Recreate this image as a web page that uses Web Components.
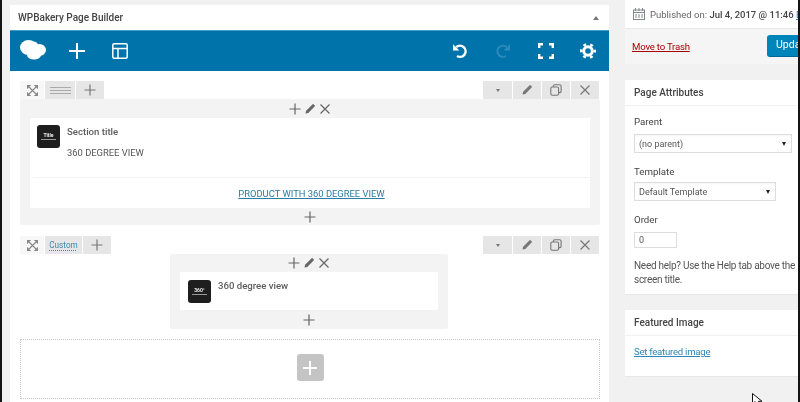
<!DOCTYPE html>
<html>
<head>
<meta charset="utf-8">
<title>WPBakery Page Builder</title>
<style>
html, body { margin: 0; padding: 0; background: #f1f1f1; }
body { font-family: Roboto, "Open Sans", "Liberation Sans", sans-serif; font-size: 10px; color: #555; }
</style>
</head>
<body>
<wp-screen>
    <wp-panel heading="WPBakery Page Builder">
        <vc-navbar></vc-navbar>
        <vc-builder>
            <vc-row>
                <vc-column wide>
                    <vc-element icon="Title" name="Section title">
                        <span slot="param">360 DEGREE VIEW</span>
                        <a slot="footer">PRODUCT WITH 360 DEGREE VIEW</a>
                    </vc-element>
                </vc-column>
            </vc-row>
            <vc-row label="Custom">
                <vc-column>
                    <vc-element icon="360°" name="360 degree view"></vc-element>
                </vc-column>
            </vc-row>
            <vc-dropzone></vc-dropzone>
        </vc-builder>
    </wp-panel>
    <wp-sidebar>
        <wp-publish></wp-publish>
        <wp-box heading="Page Attributes"><wp-attributes></wp-attributes></wp-box>
        <wp-box heading="Featured Image"><wp-featured></wp-featured></wp-box>
    </wp-sidebar>
</wp-screen>

<script>
const ICONS = {
    plus: `<svg viewBox="0 0 12 12" width="12" height="12"><path d="M6 .5v11M.5 6h11" stroke="currentColor" stroke-width="1.2" fill="none"/></svg>`,
    pencil: `<svg viewBox="0 0 12 12" width="12" height="12"><path d="M1.500 10.500l.6-2.800L8.400 1.400a1 1 0 0 1 1.400 0l.8.800a1 1 0 0 1 0 1.400L4.300 9.900z" fill="currentColor"/></svg>`,
    close: `<svg viewBox="0 0 12 12" width="12" height="12"><path d="M1.500 1.500l9 9M10.500 1.500l-9 9" stroke="currentColor" stroke-width="1.200" fill="none"/></svg>`,
    copy: `<svg viewBox="0 0 12 12" width="12" height="12"><g fill="none" stroke="currentColor" stroke-width="1.100"><rect x=".8" y="3" width="7.800" height="8.200" rx="1.500"/><path d="M3.300 3V2.200A1.400 1.400 0 0 1 4.700.8h4.900a1.500 1.500 0 0 1 1.500 1.500v5a1.300 1.300 0 0 1-1.300 1.300h-1.200"/></g></svg>`,
    expand: `<svg viewBox="0 0 11 11" width="11" height="11"><g fill="currentColor"><path d="M0 0h4.200L0 4.200zM11 0v4.200L6.800 0zM0 11V6.800L4.200 11zM11 11H6.800L11 6.800z"/></g><path d="M2 2l7 7M9 2l-7 7" stroke="currentColor" stroke-width="1.100"/></svg>`,
};

class WpScreen extends HTMLElement {
    constructor() {
        super();
        this.attachShadow({mode: "open"}).innerHTML = `
        <style>
        :host {
            display: flex;
            box-sizing: border-box;
            width: 800px;
            height: 402px;
            overflow: hidden;
            position: relative;
            background: #f1f1f1;
            border-left: 2px solid #141414;
            border-right: 2px solid #141414;
            padding-left: 8px;
            gap: 16px;
            filter: blur(.35px);
        }
        .cursor { position: absolute; left: 750px; top: 393px; }
        </style>
        <slot></slot>
        <svg class="cursor" width="12" height="12" viewBox="0 0 12 12"><path d="M.5.5v10.500l2.600-2.400 1.700 3.200h3.500L6.300 8.300h3.700z" fill="#fff" stroke="#111"/></svg>
        `;
    }
}

class WpPanel extends HTMLElement {
    constructor() {
        super();
        this.attachShadow({mode: "open"}).innerHTML = `
        <style>
        :host {
            display: block;
            width: 599px;
            flex: none;
            margin-top: 5px;
            background: #fff;
        }
        header {
            display: flex;
            align-items: center;
            justify-content: space-between;
            height: 25px;
            padding: 0 10px 0 8px;
            font-size: 10px;
            font-weight: 500;
            color: #444;
        }
        i { width: 0; height: 0; border: 3px solid transparent; border-top: 0; border-bottom: 4px solid #72777c; }
        </style>
        <header><span>${this.getAttribute("heading")}</span><i></i></header>
        <slot></slot>
        `;
    }
}

class VcNavbar extends HTMLElement {
    constructor() {
        super();
        this.attachShadow({mode: "open"}).innerHTML = `
        <style>
        :host {
            display: flex;
            align-items: center;
            box-sizing: border-box;
            height: 41px;
            padding: 0 13px 0 10px;
            background: #0073aa;
            border-top: 1px solid #3f9bc6;
            color: #fff;
        }
        svg { flex: none; display: block; }
        .spacer { flex: 1; }
        .logo { margin: -2px 23px 0 0; }
        .add { margin-right: 27px; }
        .undo { margin-right: 27px; }
        .redo { margin-right: 27px; color: #2f8cba; }
        .full { margin-right: 26px; }
        </style>
        <svg class="logo" width="26" height="20" viewBox="0 0 26 20"><g fill="#fff"><ellipse cx="8.500" cy="7.500" rx="8.500" ry="7.500"/><ellipse cx="19.500" cy="10" rx="6.500" ry="6"/><ellipse cx="14" cy="15" rx="7" ry="4.500"/><ellipse cx="13" cy="5" rx="5" ry="3.500"/></g></svg>
        <svg class="add" width="16" height="16" viewBox="0 0 16 16"><path d="M8 0v16M0 8h16" stroke="#fff" stroke-width="2"/></svg>
        <svg width="16" height="16" viewBox="0 0 16 16"><g fill="none" stroke="#fff" stroke-width="1.500"><rect x=".8" y=".8" width="14.400" height="14.400" rx="1.500"/><path d="M1 5.500h14M6 5.500V15"/></g></svg>
        <span class="spacer"></span>
        <svg class="undo" width="16" height="16" viewBox="0 0 16 16"><path d="M4.200 4.100A5.600 5.600 0 1 1 5 13" fill="none" stroke="#fff" stroke-width="2.500"/><path d="M1 1.200v6.300h6.300z" fill="#fff"/></svg>
        <svg class="redo" width="16" height="16" viewBox="0 0 16 16"><path d="M11.800 4.100A5.600 5.600 0 1 0 11 13" fill="none" stroke="currentColor" stroke-width="2"/><path d="M15 1.200v6.300H8.700z" fill="currentColor"/></svg>
        <svg class="full" width="16" height="16" viewBox="0 0 16 16"><path d="M1.200 5V1.200H5M11 1.200h3.800V5M14.800 11v3.800H11M5 14.800H1.200V11" fill="none" stroke="#fff" stroke-width="2.400"/></svg>
        <svg width="16" height="16" viewBox="0 0 16 16"><circle cx="8" cy="8" r="4.300" fill="none" stroke="#fff" stroke-width="3"/><circle cx="8" cy="8" r="6.800" fill="none" stroke="#fff" stroke-width="2.400" stroke-dasharray="3 4.120" stroke-dashoffset="1.500"/></svg>
        `;
    }
}

class VcBuilder extends HTMLElement {
    constructor() {
        super();
        this.attachShadow({mode: "open"}).innerHTML = `
        <style>
        :host {
            display: flex;
            flex-direction: column;
            gap: 11px;
            padding: 10px 9px 0 10px;
        }
        </style>
        <slot></slot>
        `;
    }
}

class VcRow extends HTMLElement {
    constructor() {
        super();
        const label = this.getAttribute("label");
        const tab = label
            ? `<span class="tab custom">${label}</span>`
            : `<span class="tab lines"><b></b><b></b><b></b></span>`;
        this.attachShadow({mode: "open"}).innerHTML = `
        <style>
        :host { display: block; }
        .bar { display: flex; justify-content: space-between; height: 18px; color: #777; }
        .group { display: flex; gap: 1px; }
        .group.right { margin-right: 1px; }
        .tab, .btn {
            display: flex;
            align-items: center;
            justify-content: center;
            background: #e6e6e6;
            box-sizing: border-box;
        }
        svg { display: block; }
        .expander { width: 24px; background: #f7f7f7; display: flex; align-items: center; justify-content: center; color: #888; }
        .tab.lines { width: 30px; flex-direction: column; gap: 2px; }
        .tab.lines b { display: block; width: 21px; height: 1px; background: #aaa; }
        .tab.custom {
            width: 37px;
            font-size: 8.200px;
            color: #3f87ab;
            text-decoration: underline dotted;
            text-underline-offset: 2px;
        }
        .tab.add { width: 28px; }
        .btn { width: 28px; }
        .btn.menu { width: 29px; }
        .btn i { width: 0; height: 0; border: 2.500px solid transparent; border-bottom: 0; border-top: 3px solid #777; }
        </style>
        <div class="bar">
            <div class="group">
                <span class="expander">${ICONS.expand}</span>
                ${tab}
                <span class="tab add">${ICONS.plus}</span>
            </div>
            <div class="group right">
                <span class="btn menu"><i></i></span>
                <span class="btn">${ICONS.pencil}</span>
                <span class="btn">${ICONS.copy}</span>
                <span class="btn">${ICONS.close}</span>
            </div>
        </div>
        <slot></slot>
        `;
    }
}

class VcColumn extends HTMLElement {
    constructor() {
        super();
        this.attachShadow({mode: "open"}).innerHTML = `
        <style>
        :host {
            display: block;
            box-sizing: border-box;
            width: 278px;
            margin-left: 150px;
            padding: 0 10px;
            background: #f3f3f3;
            border-radius: 2px;
            color: #666;
        }
        :host([wide]) { width: 100%; margin-left: 0; }
        .top, .bottom { display: flex; align-items: center; justify-content: center; }
        .top { height: 18px; gap: 3px; }
        .bottom { height: 19px; }
        :host([wide]) .top { height: 19px; }
        :host([wide]) .bottom { height: 17px; }
        svg { display: block; }
        </style>
        <div class="top">${ICONS.plus}${ICONS.pencil}${ICONS.close}</div>
        <slot></slot>
        <div class="bottom">${ICONS.plus}</div>
        `;
    }
}

class VcElement extends HTMLElement {
    constructor() {
        super();
        this.attachShadow({mode: "open"}).innerHTML = `
        <style>
        :host { display: block; background: #fff; font-size: 9.600px; color: #555; }
        .main { display: flex; gap: 7px; padding: 8px 7px 7px 8px; height: 23px; }
        .main.has { padding: 7px 7px 8px; height: auto; }
        .thumb {
            flex: none;
            width: 23px;
            height: 23px;
            display: flex;
            align-items: center;
            justify-content: center;
            flex-direction: column;
            gap: 1px;
            background: #1e1e1e;
            border-radius: 3px;
            color: #eee;
            font-size: 5px;
            font-weight: 700;
            line-height: 5px;
        }
        .thumb u { display: block; width: 15px; height: 1px; background: #999; }
        .name { line-height: 14px; margin-top: -1px; font-weight: 500; color: #5c5c5c; }
        .has .name { margin-top: 0; }
        .param { display: none; margin-top: 7px; line-height: 14px; height: 23px; font-size: 9.400px; }
        .has .param { display: block; }
        .footer { display: none; margin-left: 3px; border-top: 1px solid #f3f3f3; height: 30px; align-items: center; justify-content: center; font-size: 9.400px; }
        .footer.has { display: flex; }
        ::slotted(a) { color: #2a7ca3; text-decoration: underline; }
        </style>
        <div class="main">
            <div class="thumb">${this.getAttribute("icon")}<u></u></div>
            <div>
                <div class="name">${this.getAttribute("name")}</div>
                <div class="param"><slot name="param"></slot></div>
            </div>
        </div>
        <div class="footer"><slot name="footer"></slot></div>
        `;
        if (this.querySelector('[slot="param"]')) {
            this.shadowRoot.querySelector(".main").classList.add("has");
            this.shadowRoot.querySelector(".footer").classList.add("has");
        }
    }
}

class VcDropzone extends HTMLElement {
    constructor() {
        super();
        this.attachShadow({mode: "open"}).innerHTML = `
        <style>
        :host {
            display: flex;
            align-items: center;
            justify-content: center;
            box-sizing: border-box;
            height: 60px;
            margin-top: -1px;
            padding-bottom: 3px;
            border: 1px dotted #c8c8c8;
        }
        span {
            display: flex;
            align-items: center;
            justify-content: center;
            width: 27px;
            height: 27px;
            background: #c4c4c4;
            border-radius: 3px;
        }
        </style>
        <span><svg width="14" height="14" viewBox="0 0 14 14"><path d="M7 0v14M0 7h14" stroke="#fff" stroke-width="2"/></svg></span>
        `;
    }
}

class WpSidebar extends HTMLElement {
    constructor() {
        super();
        this.attachShadow({mode: "open"}).innerHTML = `
        <style>
        :host {
            display: flex;
            flex-direction: column;
            gap: 16px;
            width: 173px;
            flex: none;
            overflow: hidden;
        }
        </style>
        <slot></slot>
        `;
    }
}

class WpPublish extends HTMLElement {
    constructor() {
        super();
        this.attachShadow({mode: "open"}).innerHTML = `
        <style>
        :host { display: block; background: #fff; height: 64px; font-size: 9.500px; color: #666; overflow: hidden; }
        .date { display: flex; align-items: center; gap: 5px; height: 28px; padding-left: 8px; white-space: nowrap; }
        .date b { font-weight: 500; color: #444; }
        .date a { color: #2a87b5; text-decoration: underline; }
        .actions {
            display: flex;
            align-items: center;
            width: 204px;
            height: 36px;
            box-sizing: border-box;
            padding: 0 0 2px 7px;
            background: #f5f5f5;
            border-top: 1px solid #e8e8e8;
        }
        .trash { flex: 1; margin-top: 2px; font-size: 9.600px; letter-spacing: -.2px; color: #a00; text-decoration: underline; }
        .update {
            width: 62px;
            height: 21px;
            line-height: 20px;
            box-sizing: border-box;
            padding-left: 9px;
            background: #0085ba;
            color: #fff;
            font-size: 10.500px;
            border-radius: 3px;
            box-shadow: 0 1px 0 #006799;
        }
        svg { flex: none; }
        </style>
        <div class="date">
            <svg width="12" height="12" viewBox="0 0 12 12"><g fill="none" stroke="#82878c"><rect x=".5" y="2" width="11" height="9.500"/><path d="M0 4.500h12M2.500 0v3M6 0v3M9.500 0v3M3 6v4M6 6v4M9 6v4"/></g></svg>
            <span>Published on: <b>Jul 4, 2017 @ 11:46</b> <a>Edit</a></span>
        </div>
        <div class="actions"><span class="trash">Move to Trash</span><span class="update">Update</span></div>
        `;
    }
}

class WpBox extends HTMLElement {
    constructor() {
        super();
        this.attachShadow({mode: "open"}).innerHTML = `
        <style>
        :host { display: block; background: #fff; box-shadow: 0 1px 1px rgba(0,0,0,.04); }
        h2 {
            margin: 0;
            height: 25px;
            line-height: 25px;
            padding-left: 9px;
            font-size: 10px;
            font-weight: 500;
            color: #444;
            border-bottom: 1px solid #f1f1f1;
        }
        </style>
        <h2>${this.getAttribute("heading")}</h2>
        <slot></slot>
        `;
    }
}

class WpAttributes extends HTMLElement {
    constructor() {
        super();
        this.attachShadow({mode: "open"}).innerHTML = `
        <style>
        :host { display: block; box-sizing: border-box; height: 188px; padding: 9px 6px 0 9px; font-size: 10px; color: #555; }
        label { display: block; height: 14px; line-height: 14px; font-size: 9.700px; color: #444; }
        .select {
            display: flex;
            align-items: center;
            justify-content: space-between;
            box-sizing: border-box;
            height: 19px;
            padding: 0 5px 0 4px;
            margin: 5px 0 12px;
            border: 1px solid #ddd;
            font-size: 9px;
            box-shadow: inset 0 1px 2px rgba(0,0,0,.04);
        }
        .short { width: 142px; margin-top: 3px; }
        .select i { width: 0; height: 0; border: 2.500px solid transparent; border-bottom: 0; border-top: 4px solid #222; }
        .input {
            box-sizing: border-box;
            width: 43px;
            height: 16px;
            line-height: 14px;
            margin-top: 5px;
            padding-left: 4px;
            border: 1px solid #ddd;
            font-size: 9px;
        }
        p { margin: 11px 0 0; line-height: 14px; white-space: nowrap; letter-spacing: -.27px; }
        </style>
        <label>Parent</label>
        <div class="select"><span>(no parent)</span><i></i></div>
        <label>Template</label>
        <div class="select short"><span>Default Template</span><i></i></div>
        <label>Order</label>
        <div class="input">0</div>
        <p>Need help? Use the Help tab above the<br>screen title.</p>
        `;
    }
}

class WpFeatured extends HTMLElement {
    constructor() {
        super();
        this.attachShadow({mode: "open"}).innerHTML = `
        <style>
        :host { display: block; box-sizing: border-box; height: 40px; padding: 9px 0 0 9px; font-size: 9.600px; letter-spacing: -.25px; line-height: 14px; }
        a { color: #2a87b5; text-decoration: underline; }
        </style>
        <a>Set featured image</a>
        `;
    }
}

customElements.define("wp-screen", WpScreen);
customElements.define("wp-panel", WpPanel);
customElements.define("vc-navbar", VcNavbar);
customElements.define("vc-builder", VcBuilder);
customElements.define("vc-row", VcRow);
customElements.define("vc-column", VcColumn);
customElements.define("vc-element", VcElement);
customElements.define("vc-dropzone", VcDropzone);
customElements.define("wp-sidebar", WpSidebar);
customElements.define("wp-publish", WpPublish);
customElements.define("wp-box", WpBox);
customElements.define("wp-attributes", WpAttributes);
customElements.define("wp-featured", WpFeatured);
</script>
</body>
</html>
